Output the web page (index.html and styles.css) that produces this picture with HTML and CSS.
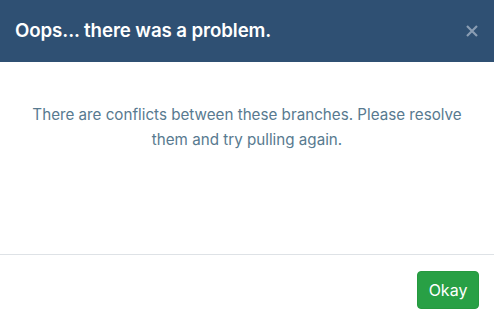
FILE: index.html
```html
<!DOCTYPE html>
<html>
<head>
<meta charset="utf-8">
<link rel="stylesheet" href="styles.css">
</head>
<body>
<div class="modal">
  <div class="modal-header">
    <h5 class="modal-title">Oops... there was a problem.</h5>
    <button class="close" type="button" aria-label="Close">
      <svg width="12" height="12" viewBox="0 0 12 12"><path d="M1 1L11 11M11 1L1 11" stroke="currentColor" stroke-width="2.2" stroke-linecap="butt"/></svg>
    </button>
  </div>
  <div class="modal-body">
    <p class="message">There are conflicts between these branches. Please resolve them and try pulling again.</p>
  </div>
  <div class="modal-footer">
    <button class="btn-okay" type="button">Okay</button>
  </div>
</div>
</body>
</html>
```
FILE: styles.css
```css
html, body {
  margin: 0;
  padding: 0;
  height: 100%;
}
body {
  font-family: Inter, "Liberation Sans", Arial, sans-serif;
  background: #ffffff;
}
.modal {
  display: flex;
  flex-direction: column;
  height: 325px;
  width: 494px;
}
.modal-header {
  height: 62px;
  box-sizing: border-box;
  background: #2f5073;
  display: flex;
  align-items: center;
  justify-content: space-between;
  padding: 0 16px 0 15px;
}
.modal-title {
  margin: 0;
  color: #ffffff;
  font-size: 18.7px;
  font-weight: 600;
  line-height: 30px;
  letter-spacing: -0.1px;
}
.close {
  border: 0;
  background: transparent;
  color: #8a9db3;
  padding: 0;
  width: 12px;
  height: 12px;
  display: flex;
}
.modal-body {
  flex: 1;
  padding: 40px 16px 0;
}
.message {
  margin: 0;
  text-align: center;
  color: #587a90;
  font-size: 15.2px;
  line-height: 25px;
}
.modal-footer {
  border-top: 1px solid #dee2e6;
  display: flex;
  justify-content: flex-end;
  padding: 16px 15px 16px;
}
.btn-okay {
  font-family: Inter, "Liberation Sans", Arial, sans-serif;
  font-size: 16px;
  font-weight: 400;
  line-height: 24px;
  color: #ffffff;
  background: #28a045;
  border: 1px solid #26993f;
  border-radius: 4px;
  padding: 6px 12px;
  width: 62px;
  height: 38px;
  box-sizing: border-box;
  display: flex;
  align-items: center;
  justify-content: center;
}
```
